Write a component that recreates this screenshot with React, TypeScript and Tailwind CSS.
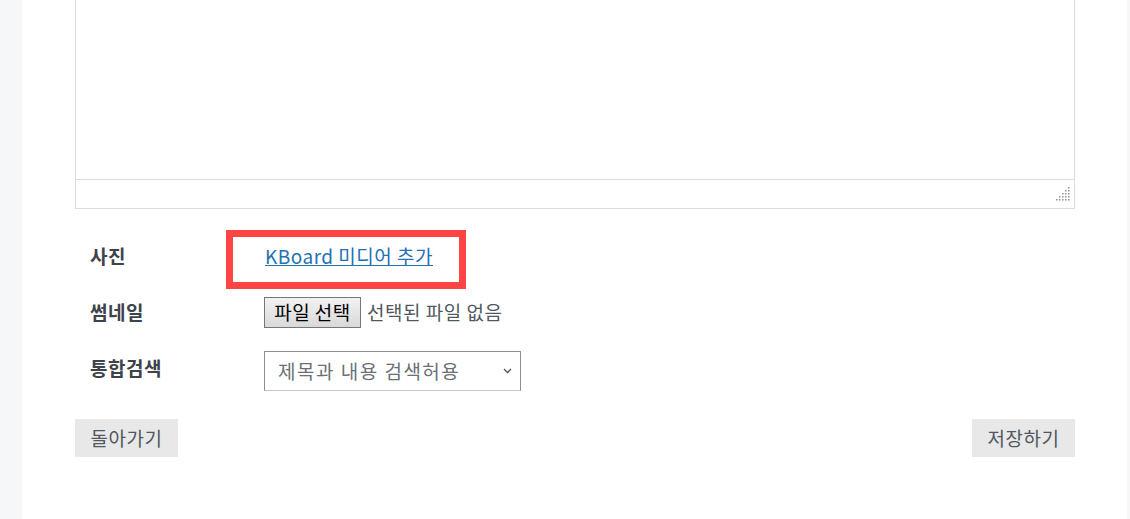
import React from "react";

const font = { fontFamily: '"Noto Sans CJK KR", "Noto Sans", sans-serif' };

function ResizeGrip() {
  const dots: [number, number][] = [];
  for (let r = 0; r < 5; r++) {
    for (let c = 4 - r; c < 5; c++) {
      dots.push([c * 3, r * 3]);
    }
  }
  return (
    <svg width="14" height="14" viewBox="0 0 14 14" className="block">
      {dots.map(([x, y], i) => (
        <rect key={i} x={x} y={y} width="1.5" height="1.5" fill="#8a8f99" />
      ))}
    </svg>
  );
}

export default function App() {
  return (
    <div
      className="flex h-[519px] w-full overflow-hidden bg-white text-[19px] tracking-[0.5px]"
      style={font}
    >
      <div className="w-[22px] shrink-0 bg-[#f6f7f8]" />

      <main className="flex-1 pl-[53px]">
        {/* editor box, its top lies above the shot */}
        <div className="flex h-[209px] w-[1000px] flex-col border-x border-b border-[#dcdcde]">
          <div className="flex-1" />
          <div className="flex h-[29px] items-center justify-end border-t border-[#dcdcde] pr-[4px]">
            <ResizeGrip />
          </div>
        </div>

        <div className="mt-[21px] flex flex-col">
          <div className="flex items-center">
            <span className="w-[151px] pb-[6px] pl-[15px] font-bold text-[#3c434a]">
              사진
            </span>
            <div className="flex h-[59px] w-[240px] items-center border-[7px] border-[#ff4444] pl-[32px] pb-[6px]">
              <a href="#" className="text-[#2271b1] underline">
                KBoard 미디어 추가
              </a>
            </div>
          </div>

          <div className="mt-[8px] flex items-center">
            <span className="w-[189px] pl-[15px] font-bold text-[#3c434a]">
              썸네일
            </span>
            <button className="h-[31px] w-[97px] border border-[#767676] bg-gradient-to-b from-[#f2f2f2] to-[#d9d9d9] text-[19px] tracking-[0.5px] text-black">
              파일 선택
            </button>
            <span className="ml-[6px] text-[#50575e]">선택된 파일 없음</span>
          </div>

          <div className="mt-[23px] flex items-center">
            <span className="w-[189px] pb-[6px] pl-[15px] font-bold text-[#3c434a]">
              통합검색
            </span>
            <div className="flex h-[40px] w-[257px] items-center justify-between border border-[#8c8f94] border-b-[#c3c4c7] pl-[13px] pr-[8px] text-[#6b6f75]">
              <span className="tracking-[1.5px]">제목과 내용 검색허용</span>
              <svg width="9" height="6" viewBox="0 0 9 6" fill="none">
                <path d="M1 1l3.5 3.5L8 1" stroke="#50575e" strokeWidth="1.3" />
              </svg>
            </div>
          </div>

          <div className="mt-[28px] flex w-[1000px] justify-between">
            <button className="h-[38px] w-[103px] bg-[#e8e8e8] text-[19px] tracking-[0.5px] text-[#50575e]">
              돌아가기
            </button>
            <button className="h-[38px] w-[103px] bg-[#e8e8e8] text-[19px] tracking-[0.5px] text-[#50575e]">
              저장하기
            </button>
          </div>
        </div>
      </main>

      <div className="w-[3px] shrink-0 bg-[#f6f7f8]" />
    </div>
  );
}
